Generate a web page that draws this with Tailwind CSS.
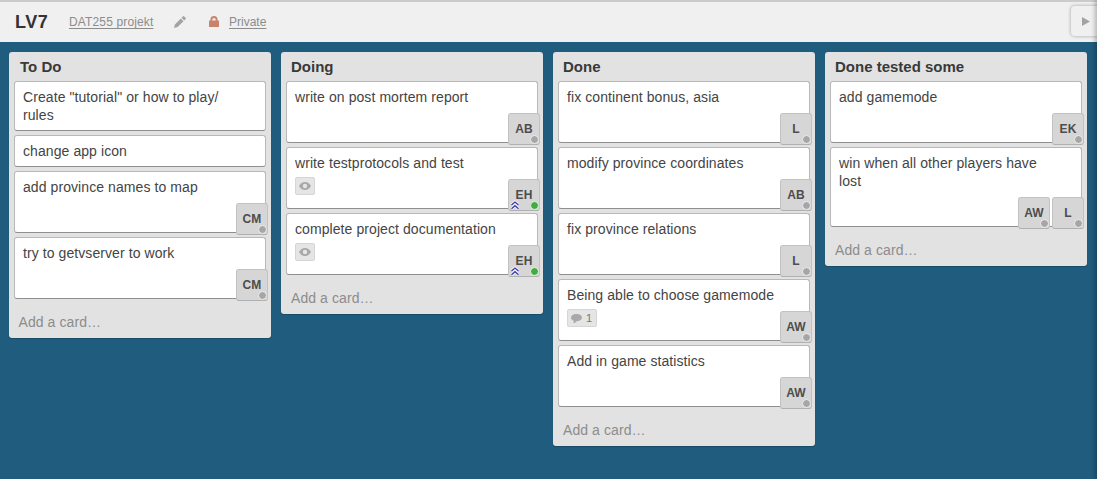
<!DOCTYPE html>
<html lang="en">
<head>
<meta charset="utf-8">
<title>LV7</title>
<script src="https://cdn.jsdelivr.net/npm/@tailwindcss/browser@4"></script>
</head>
<body class="h-[479px] overflow-hidden bg-[#205c7e] font-['Liberation_Sans',Arial,sans-serif] text-[14px] leading-[18px] text-[#444]">
<svg class="hidden">
  <symbol id="eye" viewBox="0 0 12 8"><path fill="#a9a9a9" fill-rule="evenodd" d="M0 4C1.500 1.300 3.500 0 6 0s4.500 1.300 6 4c-1.500 2.700-3.500 4-6 4S1.500 6.700 0 4zm6-2.200a2.200 2.200 0 1 0 0 4.400 2.200 2.200 0 0 0 0-4.400z"/></symbol>
  <symbol id="chev" viewBox="0 0 10 10"><path fill="none" stroke="#f4f4f4" stroke-width="3" d="M1.500 5 5 2l3.500 3M1.500 8.700 5 5.700l3.500 3"/><path fill="none" stroke="#3c3cae" stroke-width="1.300" d="M1.500 5 5 2l3.500 3M1.500 8.700 5 5.700l3.500 3"/></symbol>
</svg>
<header class="relative flex h-[42px] items-center border-t-2 border-[#cbcbcb] bg-[#f0f0f0] text-[12px] text-[#8c8c8c]">
  <h1 class="ml-[15px] w-[54px] text-[18px] font-bold tracking-[0.5px] text-[#333]">LV7</h1>
  <a class="w-[85px] whitespace-nowrap leading-[14px] tracking-[0.14px] underline underline-offset-2">DAT255 projekt</a>
  <svg class="ml-5 size-[12px]" viewBox="0 0 12 12" fill="#a3a3a3"><path d="M0 12l.9-3.600L6.800 2.500l2.700 2.700L3.600 11.100zM7.500 1.800 8.900.4q.7-.6 1.300 0l1.400 1.400q.6.700 0 1.300l-1.400 1.400z"/></svg>
  <svg class="relative -top-px ml-[23px] h-[11px] w-[10px]" viewBox="0 0 10 11"><path fill="none" stroke="#c9836b" stroke-width="1.900" d="M2.400 6V3.600a2.600 2.600 0 0 1 5.200 0V6"/><rect y="4.600" width="10" height="6.400" rx=".6" fill="#c9836b"/></svg>
  <a class="ml-[10px] leading-[14px] underline underline-offset-2">Private</a>
  <button class="absolute right-0 top-[4px] flex h-[30px] w-[26px] items-center rounded-l-[4px] bg-[#f0f0f0] pl-[11px] shadow-[0_0_3px_1px_rgba(0,0,0,0.2)]"><svg class="h-[9px] w-[8px]" viewBox="0 0 8 9"><path fill="#a3a3a3" d="M0 0l8 4.500L0 9z"/></svg></button>
</header>
<div class="absolute -right-px bottom-0 top-0 w-px shadow-[0_0_5px_1px_rgba(0,0,0,0.45)]"></div>
<main class="flex items-start gap-[10px] px-[9px] pt-[10px] [&_article]:relative [&_article]:rounded-[3px] [&_article]:border [&_article]:border-[#b8b8b8] [&_article]:border-b-[#8f8f8f] [&_article]:bg-white [&_article]:px-2 [&_article]:pt-[6px] [&_article]:tracking-[0.08px] [&_b]:absolute [&_b]:-bottom-[3px] [&_b]:size-8 [&_b]:rounded-[3px] [&_b]:border [&_b]:border-[#c2c2c2] [&_b]:border-b-[#b0b0b0] [&_b]:bg-[#d6d6d6] [&_b]:text-center [&_b]:text-[12px] [&_b]:leading-[31px] [&_b]:text-[#4d4d4d] [&_i]:absolute [&_i]:bottom-0 [&_i]:right-0 [&_i]:size-[9px] [&_i]:rounded-full [&_i]:border [&_i]:border-[#f0f0f0] [&_h2]:h-[29px] [&_h2]:pt-[6px] [&_h2]:text-[15px] [&_h2]:font-bold [&_h2]:text-[#393939] [&_section]:w-[262px] [&_section]:shrink-0 [&_section]:rounded-[3px] [&_section]:bg-[#e2e2e2] [&_section]:px-[5px] [&_section]:shadow-[0_1px_1px_rgba(0,0,0,0.2)] [&_p]:pt-[14px] [&_p]:tracking-[0.08px] [&_p]:text-[#8c8c8c]">

  <section class="h-[286px]">
    <h2 class="pl-[6px]">To Do</h2>
    <div class="flex flex-col gap-1">
      <article class="h-[50px]">Create "tutorial" or how to play/<br>rules</article>
      <article class="h-[32px]">change app icon</article>
      <article class="h-[62px]">add province names to map <b class="-right-[3px]">CM<i class="bg-[#a6a6a6]"></i></b></article>
      <article class="h-[62px]">try to getvserver to work <b class="-right-[3px]">CM<i class="bg-[#a6a6a6]"></i></b></article>
    </div>
    <p class="pl-[4.500px]">Add a card…</p>
  </section>

  <section class="h-[262px]">
    <h2 class="pl-[5px]">Doing</h2>
    <div class="flex flex-col gap-1">
      <article class="h-[62px]">write on post mortem report <b class="-right-[3px]">AB<i class="bg-[#a6a6a6]"></i></b></article>
      <article class="h-[62px]">write testprotocols and test
        <div class="mt-[5px] flex h-[18px] w-5 items-center justify-center rounded-[2px] border border-[#d6d6d6] bg-[#e5e5e5]"><svg class="h-[8px] w-[12px]"><use href="#eye"/></svg></div>
        <b class="-right-[3px]">EH<svg class="absolute bottom-0 left-px size-[10px]"><use href="#chev"/></svg><i class="bg-[#3fae3f]"></i></b></article>
      <article class="h-[62px]">complete project documentation
        <div class="mt-[5px] flex h-[18px] w-5 items-center justify-center rounded-[2px] border border-[#d6d6d6] bg-[#e5e5e5]"><svg class="h-[8px] w-[12px]"><use href="#eye"/></svg></div>
        <b class="-right-[3px]">EH<svg class="absolute bottom-0 left-px size-[10px]"><use href="#chev"/></svg><i class="bg-[#3fae3f]"></i></b></article>
    </div>
    <p class="pl-[5px]">Add a card…</p>
  </section>

  <section class="h-[394px]">
    <h2 class="pl-[5px]">Done</h2>
    <div class="flex flex-col gap-1">
      <article class="h-[62px]">fix continent bonus, asia <b class="-right-[3px]">L<i class="bg-[#a6a6a6]"></i></b></article>
      <article class="h-[62px]">modify province coordinates <b class="-right-[3px]">AB<i class="bg-[#a6a6a6]"></i></b></article>
      <article class="h-[62px]">fix province relations <b class="-right-[3px]">L<i class="bg-[#a6a6a6]"></i></b></article>
      <article class="h-[62px]">Being able to choose gamemode
        <div class="mt-[5px] flex h-[18px] w-[30px] items-center gap-[4px] rounded-[2px] border border-[#d6d6d6] bg-[#e5e5e5] pl-[3px] text-[11px] text-[#777]"><svg class="h-[11px] w-[11px]" viewBox="0 0 12 11"><path fill="#a9a9a9" d="M6 .5c3.300 0 6 1.700 6 4s-2.700 4-5.800 4c-.8 1-2.200 1.900-3.900 2 .6-.7.800-1.500.7-2.500C1.200 7.300 0 6.100 0 4.500c0-2.300 2.700-4 6-4z"/></svg>1</div>
        <b class="-right-[3px]">AW<i class="bg-[#a6a6a6]"></i></b></article>
      <article class="h-[62px]">Add in game statistics <b class="-right-[3px]">AW<i class="bg-[#a6a6a6]"></i></b></article>
    </div>
    <p class="pl-[5px]">Add a card…</p>
  </section>

  <section class="h-[214px]">
    <h2 class="pl-[5px]">Done tested some</h2>
    <div class="flex flex-col gap-1">
      <article class="h-[62px]">add gamemode <b class="-right-[3px]">EK<i class="bg-[#a6a6a6]"></i></b></article>
      <article class="h-[80px]">win when all other players have<br>lost <b class="right-[31px]">AW<i class="bg-[#a6a6a6]"></i></b><b class="-right-[3px]">L<i class="bg-[#a6a6a6]"></i></b></article>
    </div>
    <p class="pl-[5px]">Add a card…</p>
  </section>
</main>
</body>
</html>
